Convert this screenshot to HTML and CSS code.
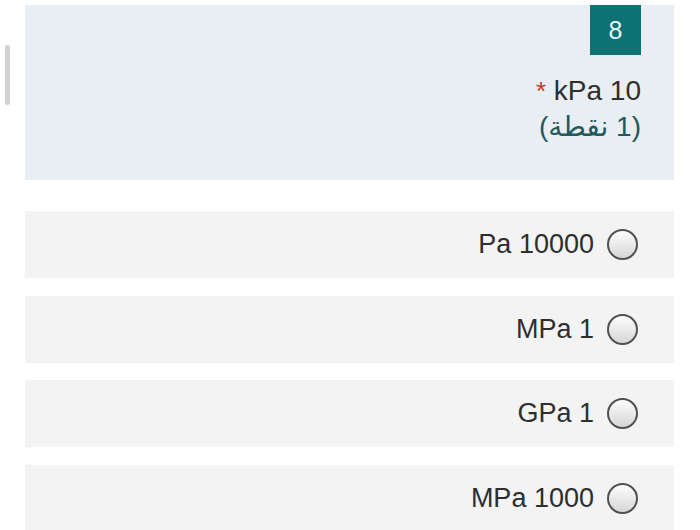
FILE: index.html
```html
<!DOCTYPE html>
<html lang="ar" dir="rtl">
<head>
  <meta charset="UTF-8" />
  <meta name="viewport" content="width=device-width, initial-scale=1.0"/>
  <title>سؤال 8</title>
  <link rel="stylesheet" href="styles.css">
</head>
<body>

  <div class="scroll-thumb"></div>

  <div class="question">
    <div class="question-head">
      <div class="number">8</div>
      <div class="title">10 kPa <span class="required">*</span></div>
      <div class="points">(1 نقطة)</div>
    </div>

    <div class="options">
      <label class="option">
        <span class="radio"></span>
        <span class="option-text">10000 Pa</span>
      </label>
      <label class="option">
        <span class="radio"></span>
        <span class="option-text">1 MPa</span>
      </label>
      <label class="option">
        <span class="radio"></span>
        <span class="option-text">1 GPa</span>
      </label>
      <label class="option">
        <span class="radio"></span>
        <span class="option-text">1000 MPa</span>
      </label>
    </div>
  </div>

</body>
</html>
```

FILE: styles.css
```css
* { box-sizing: border-box; }

body {
  margin: 0;
  font-family: 'Liberation Sans', 'DejaVu Sans', sans-serif;
  color: #333;
  background: #fff;
  overflow: hidden;
}

.scroll-thumb {
  position: absolute;
  left: 5px;
  top: 45px;
  width: 5px;
  height: 60px;
  border-radius: 3px;
  background: #d2d2d2;
}

.question {
  padding: 5px 26px 0 25px;
}

.question-head {
  background: #e9eef3;
  padding: 0 33px 34px 0;
  display: flex;
  flex-direction: column;
  align-items: flex-start;
}

.number {
  width: 51px;
  height: 50px;
  background: #0e7174;
  color: #e3f6f6;
  font-size: 25px;
  display: flex;
  align-items: center;
  justify-content: center;
}

.title {
  margin-top: 19px;
  font-size: 28px;
  line-height: 34px;
  color: #2e2e2e;
}

.required {
  color: #c0392b;
  font-size: 26px;
}

.points {
  font-size: 28px;
  line-height: 38px;
  color: #24585a;
}

.options {
  margin-top: 31px;
  display: flex;
  flex-direction: column;
  gap: 17.7px;
}

.option {
  height: 67px;
  background: #f3f3f3;
  display: flex;
  align-items: center;
  gap: 13px;
  padding-right: 36px;
}

.radio {
  width: 31px;
  height: 31px;
  border-radius: 50%;
  border: 2px solid #505050;
  background: linear-gradient(#fdfdfd, #d6d6d6);
  flex-shrink: 0;
}

.option-text {
  font-size: 27px;
  color: #2e2e2e;
}
```
